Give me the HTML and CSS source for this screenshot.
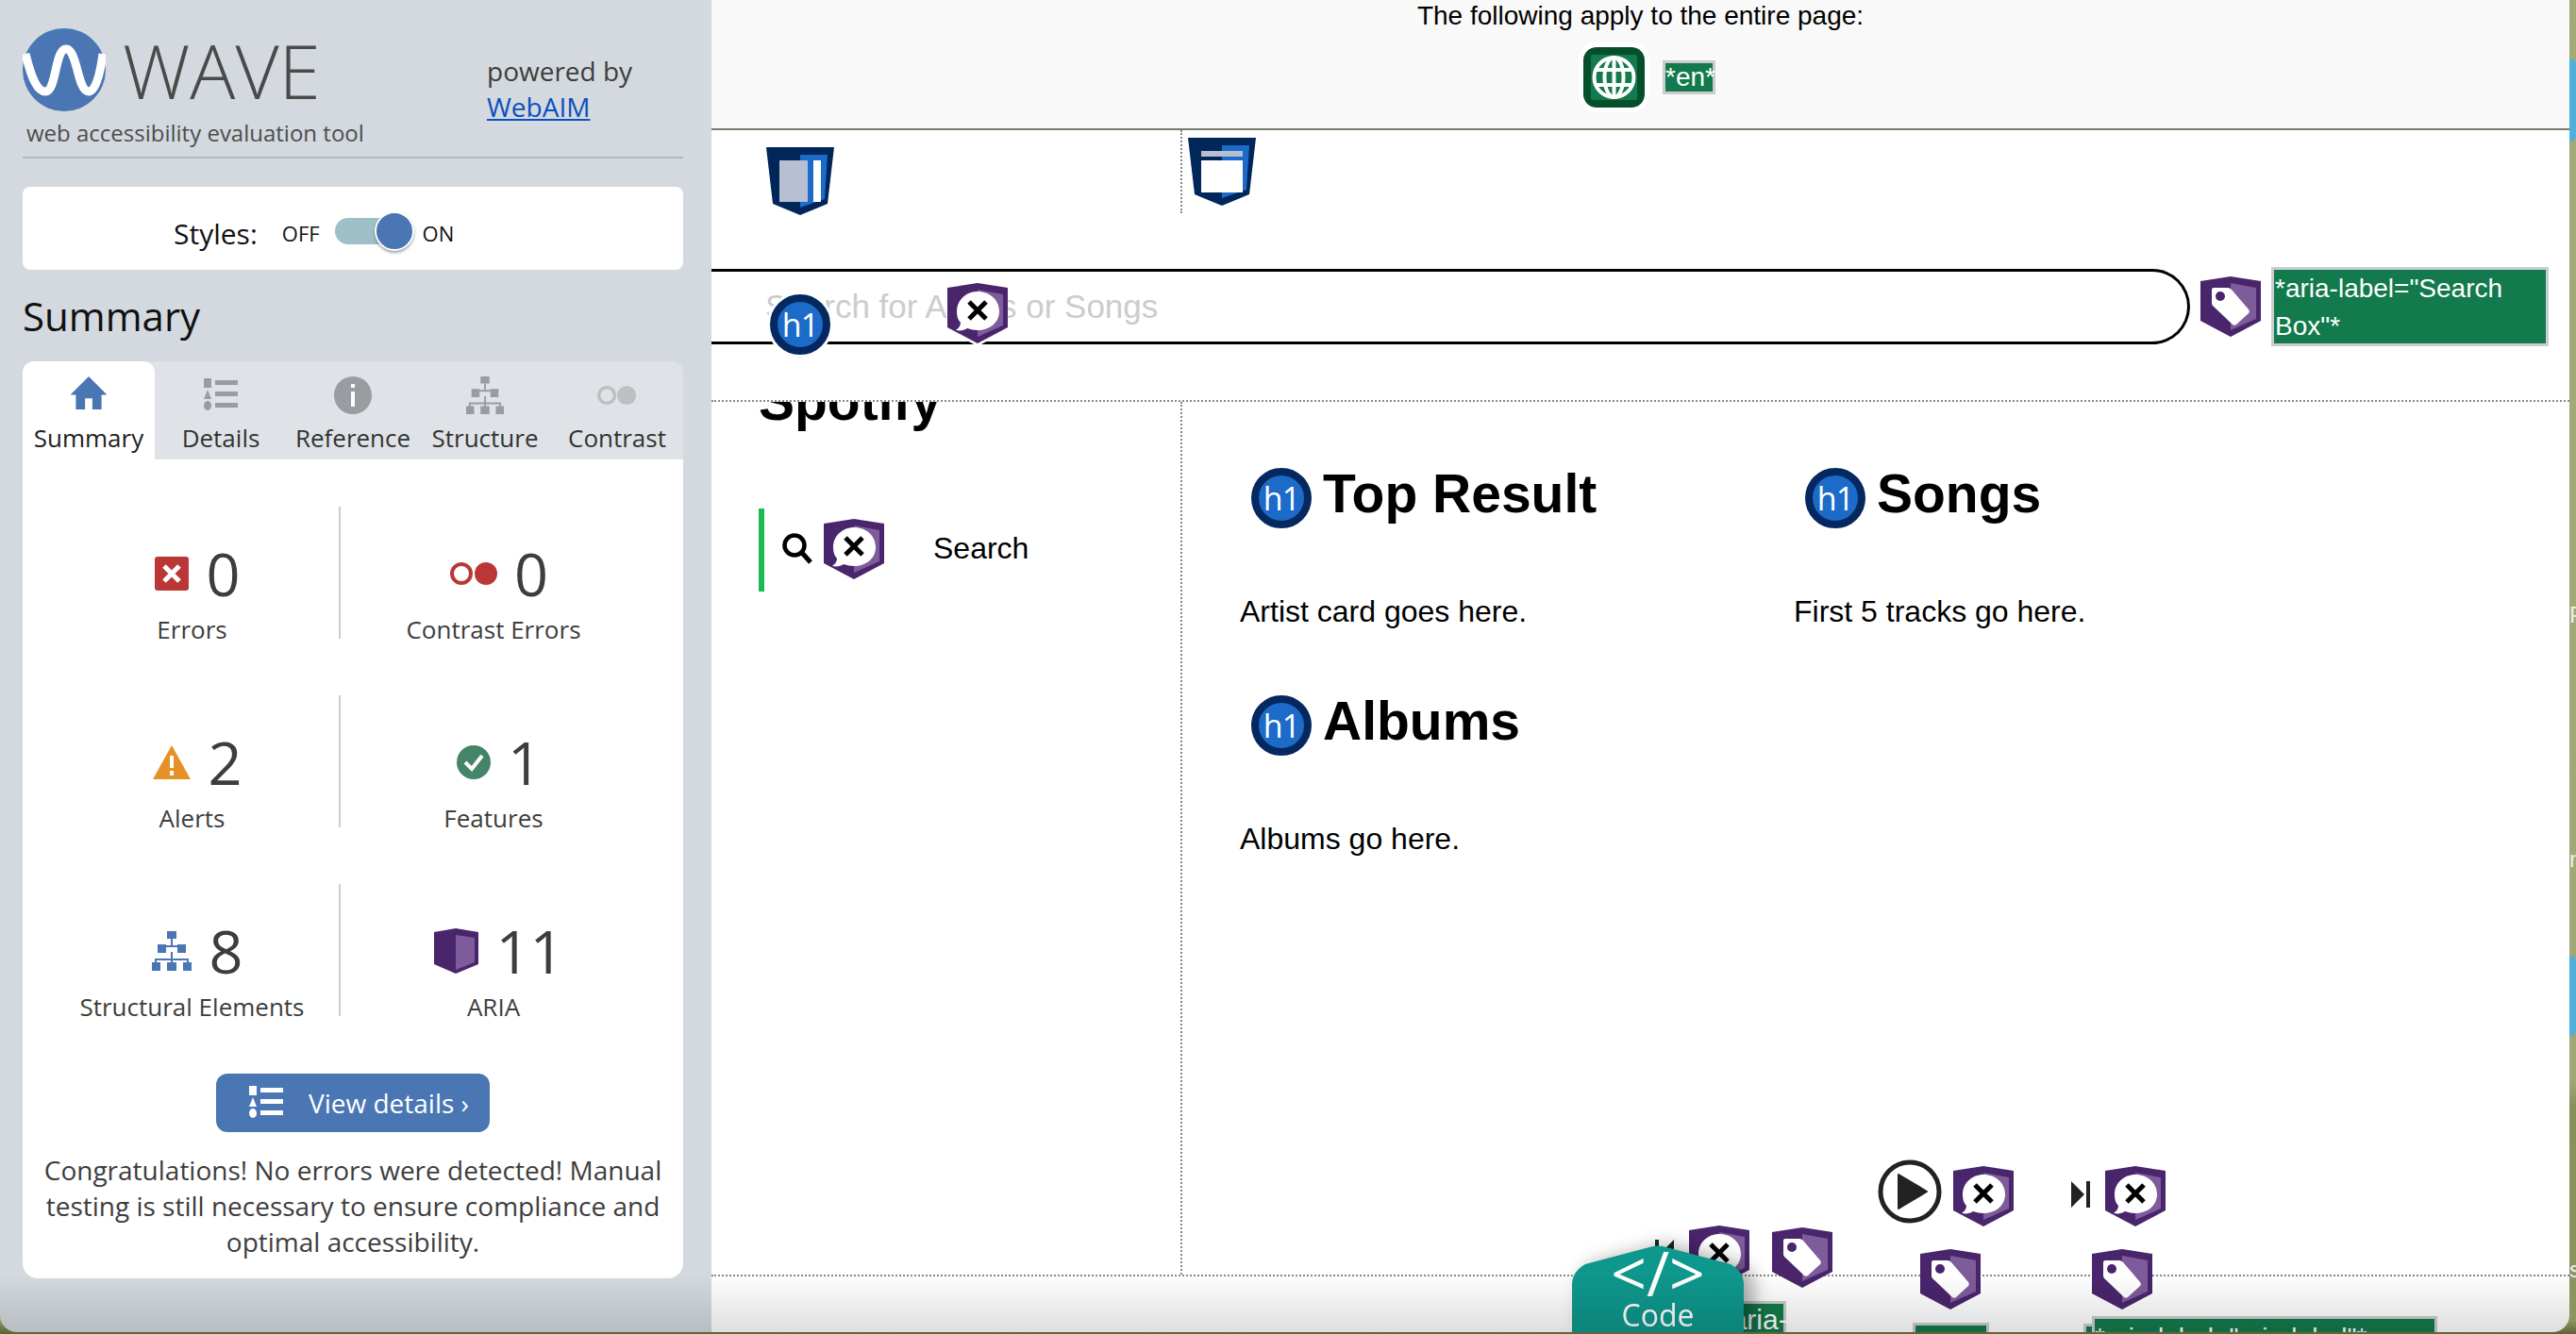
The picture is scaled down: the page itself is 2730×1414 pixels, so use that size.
FILE: index.html
```
<!DOCTYPE html>
<html lang="en">
  <head>
    <meta charset="UTF-8" />
    <title>WAVE report: Spotify</title>
    <link rel="stylesheet" href="styles.css">
  </head>
  <body>
    <svg class="defs" width="0" height="0">
      <symbol id="aria-shield" viewBox="0 0 64 64">
        <path d="M0 5 32 0 64 5V47L32 64 0 47Z" fill="#49256c" />
        <path d="M32 7 59 12V45L32 57Z" fill="#7e5b9b" />
      </symbol>
      <symbol id="aria-x" viewBox="0 0 64 64">
        <use href="#aria-shield" />
        <path d="M32 9C45 9 55 18 55 30S45 50 32 50C28 50 25 49 21 48 18 50 14 51 9 50 12 48 14 45 14 42 11 39 10 35 10 30 10 18 20 9 32 9Z" fill="#fff" />
        <path d="M23 20 41 38M41 20 23 38" stroke="#000" stroke-width="5" fill="none" />
      </symbol>
      <symbol id="aria-tag" viewBox="0 0 64 64">
        <use href="#aria-shield" />
        <path d="M14 12H29Q31 12 33 14L51 35Q53 38 50 40L38 51Q35 53 33 50L13 31Q12 30 12 28V14Q12 12 14 12Z" fill="#fff" />
        <circle cx="21" cy="21" r="5" fill="#49256c" />
      </symbol>
      <symbol id="tree" viewBox="0 0 42 42">
        <path d="M21 8V16M11 16H31V22M11 16V22M21 22V30M4 38V30H38V38M21 30V38" fill="none" stroke="currentColor" stroke-width="2" />
        <path d="M16 0H26V8H16ZM6 14H15V23H6ZM27 14H36V23H27ZM0 33H9V42H0ZM16 33H26V42H16ZM33 33H42V42H33Z" fill="currentColor" />
      </symbol>
      <symbol id="list" viewBox="0 0 36 36">
        <path d="M0 0H8V10H0ZM4 12 8 22H0ZM12 2H36V7H12ZM12 14H36V19H12ZM12 26H36V31H12Z" fill="currentColor" />
        <ellipse cx="4" cy="29" rx="4" ry="5" fill="currentColor" />
      </symbol>
    </svg>

    <div class="window">
      <aside class="sidebar">
        <header class="brand">
          <div class="brand-left">
            <div class="logo-row">
              <svg class="logo" viewBox="0 0 88 88">
                <circle cx="44" cy="44" r="44" fill="#4a76b4" />
                <path d="M3 27C10 55 16 67 24 67 36 67 34 22 46 22 58 22 58 67 70 67 77 67 82 50 85 27" fill="none" stroke="#fff" stroke-width="9" />
              </svg>
              <span class="logo-text">WAVE</span>
            </div>
            <div class="tagline">web accessibility evaluation tool</div>
          </div>
          <div class="powered">powered by<br><a href="#">WebAIM</a></div>
        </header>

        <div class="styles-card">
          <span class="styles-label">Styles:</span>
          <span class="switch-word">OFF</span>
          <span class="switch"><span class="knob"></span></span>
          <span class="switch-word">ON</span>
        </div>

        <h2 class="summary-title">Summary</h2>

        <nav class="tabs">
          <div class="tab active">
            <svg class="tab-icon home" viewBox="0 0 40 36"><path d="M20 0 40 20 H34 V36 H24 V24 H16 V36 H6 V20 H0Z" fill="#4a76b4" /></svg>
            Summary
          </div>
          <div class="tab">
            <svg class="tab-icon list-icon"><use href="#list" /></svg>
            Details
          </div>
          <div class="tab">
            <svg class="tab-icon" viewBox="0 0 40 40"><circle cx="20" cy="20" r="20" fill="#999da1" /><path d="M18 16H22V32H18ZM18 8H22V12H18Z" fill="#fff" /></svg>
            Reference
          </div>
          <div class="tab">
            <svg class="tab-icon tree-grey"><use href="#tree" /></svg>
            Structure
          </div>
          <div class="tab">
            <svg class="tab-icon" viewBox="0 0 50 40"><circle cx="12" cy="20" r="10" fill="none" stroke="#bcc0c3" stroke-width="4" /><circle cx="37" cy="20" r="12" fill="#bcc0c3" /></svg>
            Contrast
          </div>
        </nav>

        <section class="panel">
          <div class="stats">
            <div class="stat">
              <div class="stat-top">
                <svg class="stat-icon" viewBox="0 0 36 36"><rect width="36" height="36" rx="3" fill="#bb3737" /><path d="M10 10 26 26M26 10 10 26" stroke="#fff" stroke-width="5" /></svg>
                <span class="stat-num">0</span>
              </div>
              <div class="stat-label">Errors</div>
            </div>
            <div class="stat">
              <div class="stat-top">
                <svg class="stat-icon wide" viewBox="0 0 50 36"><circle cx="12" cy="18" r="10" fill="none" stroke="#bb3737" stroke-width="4" /><circle cx="38" cy="18" r="12" fill="#bb3737" /></svg>
                <span class="stat-num">0</span>
              </div>
              <div class="stat-label">Contrast Errors</div>
            </div>
            <div class="stat">
              <div class="stat-top">
                <svg class="stat-icon alert-icon" viewBox="0 0 40 36"><path d="M20 0 40 36H0Z" fill="#e69126" /><path d="M18 11H22V24H18ZM18 27H22V32H18Z" fill="#fff" /></svg>
                <span class="stat-num">2</span>
              </div>
              <div class="stat-label">Alerts</div>
            </div>
            <div class="stat">
              <div class="stat-top">
                <svg class="stat-icon" viewBox="0 0 36 36"><circle cx="18" cy="18" r="18" fill="#44856a" /><path d="M9 18 16 25 27 11" fill="none" stroke="#fff" stroke-width="4" /></svg>
                <span class="stat-num">1</span>
              </div>
              <div class="stat-label">Features</div>
            </div>
            <div class="stat">
              <div class="stat-top">
                <svg class="stat-icon tree-blue"><use href="#tree" /></svg>
                <span class="stat-num">8</span>
              </div>
              <div class="stat-label">Structural Elements</div>
            </div>
            <div class="stat">
              <div class="stat-top">
                <svg class="stat-icon book" viewBox="0 0 47 48"><path d="M0 4 23 0 47 4V38L23 48 0 38Z" fill="#49256c" /><path d="M23 7 43 10V36L23 44Z" fill="#7e5b9b" /></svg>
                <span class="stat-num">11</span>
              </div>
              <div class="stat-label">ARIA</div>
            </div>
          </div>

          <a class="details-btn" href="#">
            <svg class="btn-icon"><use href="#list" /></svg>
            View details ›
          </a>
          <p class="congrats">Congratulations! No errors were detected! Manual testing is still necessary to ensure compliance and optimal accessibility.</p>
        </section>
      </aside>

      <main class="page">
        <div class="page-notes">
          <div class="notes-title">The following apply to the entire page:</div>
          <div class="notes-row">
            <svg class="globe" viewBox="0 0 65 64">
              <rect width="65" height="64" rx="12" fill="#054f2d" />
              <rect x="8" y="8" width="49" height="48" rx="2" fill="#137a4c" />
              <circle cx="32.5" cy="32" r="21" fill="none" stroke="#fff" stroke-width="4" />
              <ellipse cx="32.5" cy="32" rx="10" ry="21" fill="none" stroke="#fff" stroke-width="4" />
              <path d="M32.5 11V53M13 24H52M13 40H52" stroke="#fff" stroke-width="4" />
            </svg>
            <span class="green-label lang-label">*en*</span>
          </div>
        </div>

        <header class="page-head">
          <div class="head-strip">
            <div class="head-left">
              <svg class="shield" viewBox="0 0 72 72">
                <path d="M0 0H72L65 60 36 72 7 60Z" fill="#00265a" />
                <path d="M36 8H65L62 55 36 64Z" fill="#1c6bc8" />
                <path d="M14 14H44V58H14Z" fill="#b7c0d2" />
                <path d="M50 14H58V58H50Z" fill="#fff" />
              </svg>
            </div>
            <svg class="shield banner-shield" viewBox="0 0 72 72">
              <path d="M0 0H72L65 60 36 72 7 60Z" fill="#00265a" />
              <path d="M36 8H65L62 55 36 64Z" fill="#1c6bc8" />
              <path d="M14 14H58V20H14Z" fill="#b7c0d2" />
              <path d="M14 24H58V58H14Z" fill="#fff" />
            </svg>
          </div>
          <div class="search-row">
            <input class="search-box" type="text" placeholder="Search for Artists or Songs" />
            <svg class="aria-icon"><use href="#aria-tag" /></svg>
            <span class="green-label search-label">*aria-label="Search Box"*</span>
          </div>
          <span class="h1-icon over-search-h1">h1</span>
          <svg class="aria-icon over-search-aria"><use href="#aria-x" /></svg>
        </header>

        <div class="content">
          <div class="side-nav">
            <h2 class="app-name">Spotify</h2>
            <div class="nav-item">
              <svg class="search-glyph" viewBox="0 0 32 33"><circle cx="13" cy="13" r="10.5" fill="none" stroke="#000" stroke-width="4.5" /><path d="M21 21 30 31" stroke="#000" stroke-width="5" /></svg>
              <svg class="aria-icon"><use href="#aria-x" /></svg>
              <span class="nav-text">Search</span>
            </div>
          </div>
          <div class="results">
            <section class="result">
              <h2 class="result-title"><span class="h1-icon">h1</span>Top Result</h2>
              <p class="result-text">Artist card goes here.</p>
            </section>
            <section class="result">
              <h2 class="result-title"><span class="h1-icon">h1</span>Songs</h2>
              <p class="result-text">First 5 tracks go here.</p>
            </section>
            <section class="result">
              <h2 class="result-title"><span class="h1-icon">h1</span>Albums</h2>
              <p class="result-text">Albums go here.</p>
            </section>
          </div>
        </div>

        <div class="player"></div>

        <!-- wave icons sitting on the player bar -->
        <svg class="control play-btn" viewBox="0 0 68 68"><ellipse cx="34" cy="34" rx="31" ry="31" fill="none" stroke="#222" stroke-width="5" /><path d="M22 16 52 34 22 52Z" fill="#222" stroke="#222" stroke-width="2" stroke-linejoin="round" /></svg>
        <svg class="control next-btn" viewBox="0 0 20 28"><path d="M0 0 14 14 0 28ZM16 0H20V28H16Z" fill="#222" /></svg>
        <svg class="control prev-btn" viewBox="0 0 20 28"><path d="M20 0 6 14 20 28ZM4 0H0V28H4Z" fill="#222" /></svg>
        <svg class="aria-icon at-play"><use href="#aria-x" /></svg>
        <svg class="aria-icon at-next"><use href="#aria-x" /></svg>
        <svg class="aria-icon at-prev"><use href="#aria-x" /></svg>
        <svg class="aria-icon at-tag-a"><use href="#aria-tag" /></svg>
        <svg class="aria-icon at-tag-b"><use href="#aria-tag" /></svg>
        <svg class="aria-icon at-tag-c"><use href="#aria-tag" /></svg>
        <span class="green-label clip-a">*aria-</span>
        <span class="green-label clip-b">*aria-</span>
        <span class="green-label clip-c">*aria-</span>
        <span class="green-label clip-d">*aria-label="aria-label"*</span>
        <div class="code-shadow">
          <div class="code-tab">
            <span class="code-mark">&lt;/&gt;</span>
            <span class="code-word">Code</span>
          </div>
        </div>
      </main>
      <div class="bottom-shade"></div>
    </div>

    <!-- bits of the desktop showing past the window edge -->
    <div class="desk desk-blue-a"></div>
    <div class="desk desk-blue-b"></div>
    <span class="desk-letter letter-p">P</span>
    <span class="desk-letter letter-n">n</span>
    <span class="desk-letter letter-s">s</span>
  </body>
</html>
```
FILE: styles.css
```
* {
  box-sizing: border-box;
}
html,
body {
  margin: 0;
  height: 100%;
  overflow: hidden;
}
body {
  background: linear-gradient(#a3aa78, #a0a878 81%, #87905a 83%, #8c9560 99%, #5d6236);
  font-family: "Liberation Sans", Arial, sans-serif;
  color: #000;
  position: relative;
}
.defs {
  position: absolute;
}

.window {
  position: relative;
  display: flex;
  width: 2723px;
  height: 1412px;
  overflow: hidden;
  border-bottom-left-radius: 18px;
  border-bottom-right-radius: 18px;
}
.bottom-shade {
  position: absolute;
  left: 0;
  right: 0;
  bottom: 0;
  height: 62px;
  background: linear-gradient(rgba(0, 0, 0, 0), rgba(0, 0, 0, 0.13));
  pointer-events: none;
}

/* sidebar */
.sidebar {
  width: 754px;
  flex: none;
  padding: 30px 30px 0 24px;
  background: #d3d9de;
  font-family: "Open Sans", sans-serif;
  color: #3d3d3d;
}
.brand {
  display: flex;
  justify-content: space-between;
  height: 138px;
  border-bottom: 2px solid #b4b9bd;
}
.logo-row {
  display: flex;
  align-items: center;
  gap: 18px;
  height: 88px;
}
.logo {
  width: 88px;
  height: 88px;
}
.logo-text {
  font-size: 80px;
  font-weight: 300;
  line-height: 88px;
  color: #4a4a4a;
}
.tagline {
  margin: 7px 0 0 4px;
  font-size: 24px;
  line-height: 32px;
  color: #4d4d4d;
}
.powered {
  width: 208px;
  padding-top: 26px;
  font-size: 28px;
  line-height: 38px;
}
.powered a {
  color: #0b50c0;
}

.styles-card {
  display: flex;
  align-items: center;
  height: 88px;
  margin-top: 30px;
  padding: 10px 0 0 160px;
  background: #fff;
  border-radius: 8px;
  color: #111;
}
.styles-label {
  margin-right: 26px;
  font-size: 30px;
}
.switch-word {
  font-size: 22px;
}
.switch {
  position: relative;
  width: 64px;
  height: 28px;
  margin: -4px 29px 0 16px;
  background: #9fbfc9;
  border-radius: 14px;
}
.knob {
  position: absolute;
  top: -7px;
  right: -20px;
  width: 42px;
  height: 42px;
  background: #4a76b4;
  border: 2px solid #fff;
  border-radius: 50%;
  box-shadow: 0 2px 3px rgba(0, 0, 0, 0.35);
}
.summary-title {
  margin: 20px 0 0;
  font-size: 42px;
  font-weight: 400;
  line-height: 57px;
  color: #111;
}

.tabs {
  display: flex;
  height: 104px;
  margin-top: 20px;
  background: #dfe3e7;
  border-radius: 12px 12px 0 0;
}
.tab {
  width: 140px;
  padding-top: 16px;
  display: flex;
  flex-direction: column;
  align-items: center;
  font-size: 26px;
  line-height: 36px;
  color: #333;
}
.tab.active {
  background: #fff;
  border-radius: 12px 12px 0 0;
  color: #222;
}
.tab-icon {
  width: 42px;
  height: 40px;
  margin-bottom: 7px;
  flex: none;
}
.home {
  height: 35px;
  margin: 0 0 12px;
}
.list-icon {
  width: 36px;
  color: #999da1;
}
.tree-grey {
  color: #999da1;
}

.panel {
  height: 868px;
  padding-top: 50px;
  background: #fff;
  border-radius: 0 0 16px 16px;
}
.stats {
  display: grid;
  grid-template-columns: 311px 326px;
  row-gap: 60px;
  margin-left: 24px;
}
.stat {
  height: 140px;
  padding-top: 40px;
  text-align: center;
}
.stat:nth-child(even) {
  border-left: 2px solid #ccc;
}
.stat-top {
  display: flex;
  align-items: center;
  justify-content: center;
  gap: 18px;
  height: 62px;
  padding-left: 12px;
}
.stat-icon {
  width: 36px;
  height: 36px;
  flex: none;
}
.stat-icon.wide {
  width: 50px;
}
.stat-icon.alert-icon {
  width: 40px;
}
.tree-blue {
  width: 42px;
  height: 42px;
  color: #4a76b4;
}
.book {
  width: 47px;
  height: 48px;
}
.stat-num {
  font-size: 63px;
  font-weight: 400;
  line-height: 62px;
  color: #3d3d3d;
}
.stat-label {
  margin-top: 10px;
  font-size: 26px;
  line-height: 36px;
}
.details-btn {
  display: flex;
  align-items: center;
  width: 290px;
  height: 62px;
  margin: 61px auto 0;
  padding-left: 35px;
  background: #4a76b4;
  border-radius: 12px;
  color: #fff;
  font-size: 28px;
  text-decoration: none;
}
.btn-icon {
  width: 36px;
  height: 36px;
  margin-right: 27px;
  color: #fff;
}
.congrats {
  margin: 21px 20px 0;
  font-size: 28px;
  line-height: 38px;
  text-align: center;
}

/* page under test */
.page {
  position: relative;
  flex: 1;
  min-width: 0;
  background: #fff;
  overflow: hidden;
}
.page-notes {
  height: 138px;
  background: #f9f9f9;
  border-bottom: 2px solid #767b6c;
  text-align: center;
}
.notes-title {
  font-size: 28px;
  line-height: 34px;
}
.notes-row {
  display: flex;
  align-items: center;
  justify-content: center;
  gap: 19px;
  margin: 16px 0 0 19px;
}
.globe {
  width: 65px;
  height: 64px;
  border-radius: 14px;
  box-shadow: 0 0 0 5px #fff;
}
.green-label {
  display: inline-block;
  background: #127a4c;
  border: 3px solid #ccc;
  color: #fff;
  font-size: 28px;
  line-height: 38px;
}
.lang-label {
  width: 56px;
  height: 36px;
  line-height: 30px;
  text-align: center;
  white-space: nowrap;
}
.page-head {
  position: relative;
  height: 286px;
}
.head-strip {
  display: flex;
  align-items: flex-start;
  height: 145px;
}
.head-left {
  width: 499px;
  height: 88px;
  padding: 18px 0 0 58px;
  border-right: 2px dotted #888;
  margin-right: 6px;
}
.shield {
  display: block;
  width: 72px;
  height: 72px;
}
.banner-shield {
  margin-top: 8px;
}
.search-row {
  display: flex;
  align-items: center;
  gap: 11px;
}
.search-box {
  width: 1567px;
  height: 80px;
  padding-left: 57px;
  border: 3px solid #000;
  border-left: none;
  border-radius: 0 40px 40px 0;
  background: #fff;
  font-family: "Liberation Sans", Arial, sans-serif;
  font-size: 35px;
  outline: none;
}
.search-box::placeholder {
  color: #ccc;
}
.aria-icon {
  display: block;
  width: 64px;
  height: 64px;
  flex: none;
}
.search-label {
  width: 294px;
  height: 84px;
  padding: 0 1px;
  line-height: 40px;
  font-size: 28px;
}
.h1-icon {
  display: flex;
  align-items: center;
  justify-content: center;
  width: 64px;
  height: 64px;
  flex: none;
  background: #1c6bc8;
  border: 8px solid #04285f;
  border-radius: 50%;
  color: #fff;
  font-family: "Open Sans", sans-serif;
  font-size: 34px;
  font-weight: 400;
  letter-spacing: -1px;
}
.over-search-h1 {
  position: absolute;
  left: 62px;
  top: 174px;
  box-shadow: 0 0 0 3px #fff;
}
.over-search-aria {
  position: absolute;
  left: 250px;
  top: 162px;
  filter: drop-shadow(0 3px 0 #fff);
}

.content {
  display: grid;
  grid-template-columns: 499px 1fr;
  height: 929px;
  border-top: 2px dotted #888;
  border-bottom: 2px dotted #888;
}
.side-nav {
  padding-left: 50px;
  border-right: 2px dotted #888;
  overflow: hidden;
}
.app-name {
  margin: -31px 0 0;
  font-size: 57px;
  line-height: 60px;
  font-weight: 700;
}
.nav-item {
  display: flex;
  align-items: center;
  height: 88px;
  margin-top: 84px;
  padding: 0 0 3px 19px;
  border-left: 6px solid #1db954;
}
.search-glyph {
  width: 32px;
  height: 33px;
  margin-right: 12px;
}
.nav-text {
  margin-left: 52px;
  font-size: 32px;
}
.results {
  display: grid;
  grid-template-columns: 587px 587px;
  grid-auto-rows: 241px;
  padding: 70px 0 0 61px;
}
.result-title {
  display: flex;
  align-items: flex-start;
  gap: 12px;
  height: 64px;
  margin: 0;
  padding-left: 12px;
  font-size: 57px;
  line-height: 54px;
  font-weight: 700;
}
.result-text {
  margin: 69px 0 0;
  font-size: 32px;
  line-height: 38px;
}
.player {
  height: 60px;
}

/* annotations over the player bar */
.control,
.at-play,
.at-next,
.at-prev,
.at-tag-a,
.at-tag-b,
.at-tag-c,
.clip-a,
.clip-b,
.clip-c,
.clip-d,
.code-shadow {
  position: absolute;
}
.play-btn {
  left: 1236px;
  top: 1229px;
  width: 68px;
  height: 68px;
}
.next-btn {
  left: 1441px;
  top: 1252px;
  width: 20px;
  height: 28px;
}
.prev-btn {
  left: 1000px;
  top: 1314px;
  width: 20px;
  height: 28px;
}
.at-play {
  left: 1316px;
  top: 1236px;
}
.at-next {
  left: 1477px;
  top: 1236px;
}
.at-prev {
  left: 1036px;
  top: 1299px;
}
.at-tag-a {
  left: 1124px;
  top: 1301px;
}
.at-tag-b {
  left: 1281px;
  top: 1324px;
}
.at-tag-c {
  left: 1463px;
  top: 1324px;
}
.clip-a {
  left: 1034px;
  top: 1379px;
  width: 105px;
  height: 60px;
  padding-left: 32px;
  font-size: 30px;
  line-height: 34px;
  white-space: nowrap;
}
.clip-b {
  left: 1273px;
  top: 1402px;
  width: 81px;
  height: 40px;
}
.clip-c {
  left: 1454px;
  top: 1403px;
  width: 60px;
  height: 40px;
}
.clip-d {
  left: 1463px;
  top: 1395px;
  width: 366px;
  height: 40px;
  line-height: 40px;
}
.code-shadow {
  left: 912px;
  top: 1320px;
  filter: drop-shadow(10px 0 10px rgba(0, 0, 0, 0.35));
}
.code-tab {
  display: flex;
  flex-direction: column;
  align-items: center;
  width: 182px;
  height: 92px;
  background: #0e978c;
  color: #fff;
  clip-path: path("M0 92V42Q0 28 14 20L86 1Q91 0 96 1L168 20Q182 28 182 42V92Z");
  font-family: "Open Sans", sans-serif;
}
.code-mark {
  font-size: 66px;
  font-weight: 400;
  line-height: 56px;
}
.code-word {
  font-size: 32px;
  line-height: 36px;
}

.desk {
  position: absolute;
  right: 0;
  width: 7px;
  background: #4fb0dc;
  border-radius: 0 6px 6px 0;
}
.desk-blue-a {
  top: 62px;
  height: 88px;
}
.desk-blue-b {
  top: 1013px;
  height: 85px;
}
.desk-letter {
  position: absolute;
  left: 2723px;
  color: #eee;
  font-size: 24px;
  line-height: 24px;
}
.letter-p {
  top: 640px;
}
.letter-n {
  top: 899px;
}
.letter-s {
  top: 1334px;
}
```
